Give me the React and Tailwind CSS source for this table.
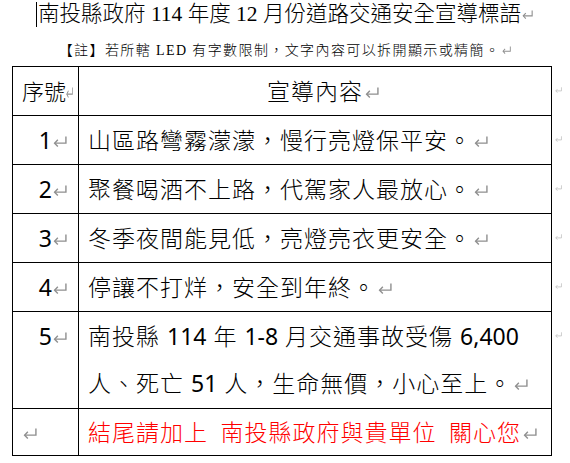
import React from "react";

const Ret = ({ w = 14, h = 11, cls = "ml-[2px]", color = "#8f8f8f" }) => (
  <svg
    width={w}
    height={h}
    viewBox="0 0 13 10"
    preserveAspectRatio="none"
    className={"inline-block align-[2px] " + cls}
    fill="none"
    stroke={color}
    strokeWidth="1.3"
  >
    <path d="M12 0.5 V6.5 H1.5" />
    <path d="M4.5 3.5 L1.5 6.5 L4.5 9.5" />
  </svg>
);

const Side = () => (
  <td className="align-top pt-[8px] pl-[3px] leading-none">
    <Ret w={7} h={6} cls="" color="#bdbdbd" />
  </td>
);

const L = ({ children }) => <span className="tracking-[0px] font-normal">{children}</span>;

const rows = [
  { n: "1", t: "山區路彎霧濛濛，慢行亮燈保平安。" },
  { n: "2", t: "聚餐喝酒不上路，代駕家人最放心。" },
  { n: "3", t: "冬季夜間能見低，亮燈亮衣更安全。" },
  { n: "4", t: "停讓不打烊，安全到年終。" },
];

export default function App() {
  return (
    <div className="w-[570px] h-[463px] bg-white overflow-hidden text-black">
      <div className="h-[34px] pl-[36px] pt-[2px] flex">
        <div className="w-px h-[25px] bg-black" />
        <div className="ml-[1px] text-[21.5px] leading-[25px] whitespace-pre font-light font-[Liberation_Serif,Noto_Sans_CJK_TC,serif]">
          南投縣政府 114 年度 12 月份道路交通安全宣導標語
          <Ret w={11} h={9} cls="ml-[1px]" />
        </div>
      </div>
      <div className="h-[32px] flex items-center justify-center whitespace-pre text-[14px] tracking-[1.4px] font-light font-[Liberation_Serif,Noto_Sans_CJK_TC,serif]">
        【註】若所轄 LED 有字數限制，文字內容可以拆開顯示或精簡。
        <Ret w={9} h={8} cls="ml-[2px]" />
      </div>
      <table className="ml-[12px] border-collapse table-fixed w-[557px] font-light font-[Noto_Sans,Noto_Sans_CJK_TC,sans-serif] text-[23px] tracking-[1px]">
        <tbody>
          <tr className="h-[49px]">
            <td className="w-[66px] border border-black pl-[9px] align-middle whitespace-nowrap tracking-[0px] text-[22px]">
              序號<Ret w={7} h={11} cls="" />
            </td>
            <td className="w-[473px] border border-black text-center pl-[16px] align-middle">
              宣導內容<Ret />
            </td>
            <Side />
          </tr>
          {rows.map((r) => (
            <tr key={r.n} className="h-[49px]">
              <td className="border border-black text-right pr-[11px] align-middle font-normal tracking-[0px]">
                {r.n}
                <Ret cls="ml-[1px]" />
              </td>
              <td className="border border-black pl-[9px] align-middle whitespace-nowrap">
                {r.t}
                <Ret cls="ml-[2px]" />
              </td>
              <Side />
            </tr>
          ))}
          <tr className="h-[97px]">
            <td className="border border-black text-right pr-[11px] align-top pt-[12px] leading-[24px] font-normal tracking-[0px]">
              5<Ret cls="ml-[1px]" />
            </td>
            <td className="border border-black pl-[9px] align-middle leading-[47px] whitespace-nowrap">
              南投縣 <L>114</L> 年 <L>1-8</L> 月交通事故受傷 <L>6,400</L>
              <br />
              人、死亡 <L>51</L> 人，生命無價，小心至上。
              <Ret cls="ml-[2px]" />
            </td>
            <Side />
          </tr>
          <tr className="h-[47px]">
            <td className="border border-black pl-[8px] align-middle">
              <Ret />
            </td>
            <td className="border border-black pl-[9px] align-middle whitespace-pre text-[#ff0000]">
              結尾請加上{"\u2002"}南投縣政府與貴單位{"\u2002"}關心您
              <Ret />
            </td>
            <td />
          </tr>
        </tbody>
      </table>
    </div>
  );
}
